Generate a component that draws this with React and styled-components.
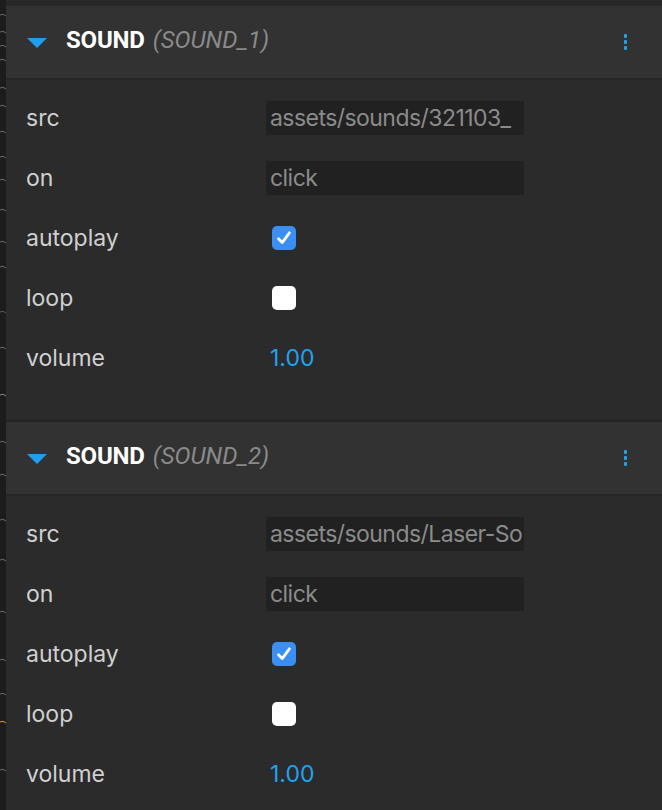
import React from 'react';
import styled, { createGlobalStyle } from 'styled-components';

const GlobalStyle = createGlobalStyle`
  html, body {
    margin: 0;
    padding: 0;
    background: #2b2b2b;
  }
  body {
    width: 662px;
    height: 810px;
    overflow: hidden;
  }
`;

const sounds = [
  { id: 'SOUND_1', src: 'assets/sounds/321103_', on: 'click', autoplay: true, loop: false, volume: '1.00' },
  { id: 'SOUND_2', src: 'assets/sounds/Laser-So', on: 'click', autoplay: true, loop: false, volume: '1.00' },
];

// little marks in the left gutter (y, colour)
const marks = [
  [15, '#6a6a6a'], [32, '#6a6a6a'], [46, '#6a6a6a'], [60, '#6a6a6a'], [88, '#6a6a6a'],
  [106, '#6a6a6a'], [132, '#6a6a6a'], [157, '#6a6a6a'], [180, '#6a6a6a'], [210, '#6a6a6a'],
  [242, '#6a6a6a'], [267, '#6a6a6a'], [312, '#5a5a5a'], [348, '#6a6a6a'], [395, '#8a8a8a'],
  [442, '#6a6a6a'], [475, '#6a6a6a'], [520, '#6a6a6a'], [560, '#6a6a6a'],
  [612, '#6a6a6a'], [660, '#6a6a6a'], [694, '#6a6a6a'], [722, '#e0a020'], [770, '#6a6a6a'],
];

const Page = styled.div`
  display: flex;
  width: 662px;
  height: 810px;
  overflow: hidden;
  background: #2b2b2b;
`;

const Gutter = styled.div`
  width: 6px;
  flex-shrink: 0;
  background: #1c1c1c;
`;

const Panel = styled.div`
  flex: 1;
  display: flex;
  flex-direction: column;
  overflow: hidden;
`;

const TopStrip = styled.div`
  height: 6px;
  flex-shrink: 0;
  background: #282828;
`;

const Section = styled.section`
  flex-shrink: 0;
  display: flex;
  flex-direction: column;
  border-top: ${p => (p.first ? 'none' : '2px solid #242424')};
`;

const Header = styled.div`
  height: 72px;
  flex-shrink: 0;
  display: flex;
  align-items: center;
  padding: 0 0 0 21px;
  background: #323232;
  border-bottom: 2px solid #262626;
  font-family: Roboto, "Liberation Sans", sans-serif;
  font-size: 24px;
`;

const Caret = styled.svg`
  width: 20px;
  height: 10px;
  margin-right: 19px;
  margin-top: 2px;
`;

const Heading = styled.div`
  margin-top: -4px;
`;

const Title = styled.span`
  color: #ffffff;
  font-weight: 700;
  letter-spacing: -0.2px;
`;

const Id = styled.span`
  color: #8a8a8a;
  font-style: italic;
  margin-left: 8px;
`;

const Menu = styled.div`
  margin-left: auto;
  margin-right: 35px;
  display: flex;
  flex-direction: column;
  gap: 2.5px;
`;

const Dot = styled.span`
  width: 3.5px;
  height: 3.5px;
  border-radius: 1px;
  background: #1ea0f0;
`;

const Body = styled.div`
  padding: 8px 0 32px 20px;
  display: flex;
  flex-direction: column;
`;

const Row = styled.div`
  height: 60px;
  flex-shrink: 0;
  display: grid;
  grid-template-columns: 240px 258px;
  align-items: center;
  font-family: Inter, "Liberation Sans", sans-serif;
  font-size: 23px;
`;

const Label = styled.span`
  color: #d0d0d0;
`;

const Input = styled.div`
  height: 34px;
  line-height: 34px;
  padding: 0 0 0 4px;
  background: #212121;
  color: #8b8b8b;
  letter-spacing: -0.55px;
  white-space: nowrap;
  overflow: hidden;
`;

const Check = styled.span`
  width: 24px;
  height: 24px;
  margin-left: 6px;
  border-radius: 5px;
  background: ${p => (p.checked ? '#3a8ff5' : '#ffffff')};
  display: flex;
  align-items: center;
  justify-content: center;
`;

const Number = styled.span`
  color: #1fa3ef;
  padding-left: 4px;
`;

const Checkbox = ({ checked }) => (
  <Check checked={checked}>
    {checked && (
      <svg width="18" height="18" viewBox="0 0 18 18">
        <path d="M3.5 9.8 L7.2 13.6 L14.4 3.8" fill="none" stroke="#fff" strokeWidth="2.8" strokeLinecap="round" strokeLinejoin="round" />
      </svg>
    )}
  </Check>
);

const SoundPanel = ({ sound, first }) => (
  <Section first={first}>
    <Header>
      <Caret viewBox="0 0 20 10">
        <path d="M0 0 H20 L10 10 Z" fill="#1ea0f0" />
      </Caret>
      <Heading>
        <Title>SOUND</Title>
        <Id>({sound.id})</Id>
      </Heading>
      <Menu>
        <Dot />
        <Dot />
        <Dot />
      </Menu>
    </Header>
    <Body>
      <Row>
        <Label>src</Label>
        <Input>{sound.src}</Input>
      </Row>
      <Row>
        <Label>on</Label>
        <Input>{sound.on}</Input>
      </Row>
      <Row>
        <Label>autoplay</Label>
        <Checkbox checked={sound.autoplay} />
      </Row>
      <Row>
        <Label>loop</Label>
        <Checkbox checked={sound.loop} />
      </Row>
      <Row>
        <Label>volume</Label>
        <Number>{sound.volume}</Number>
      </Row>
    </Body>
  </Section>
);

export default function App() {
  return (
    <Page>
      <GlobalStyle />
      <Gutter>
        <svg width="6" height="810" viewBox="0 0 6 810">
          {marks.map(([y, c], i) => (
            <path key={i} d={`M0 ${y} Q3 ${y - 2} 6 ${y + 1}`} fill="none" stroke={c} strokeWidth="1" />
          ))}
        </svg>
      </Gutter>
      <Panel>
        <TopStrip />
        {sounds.map((s, i) => (
          <SoundPanel key={s.id} sound={s} first={i === 0} />
        ))}
      </Panel>
    </Page>
  );
}
